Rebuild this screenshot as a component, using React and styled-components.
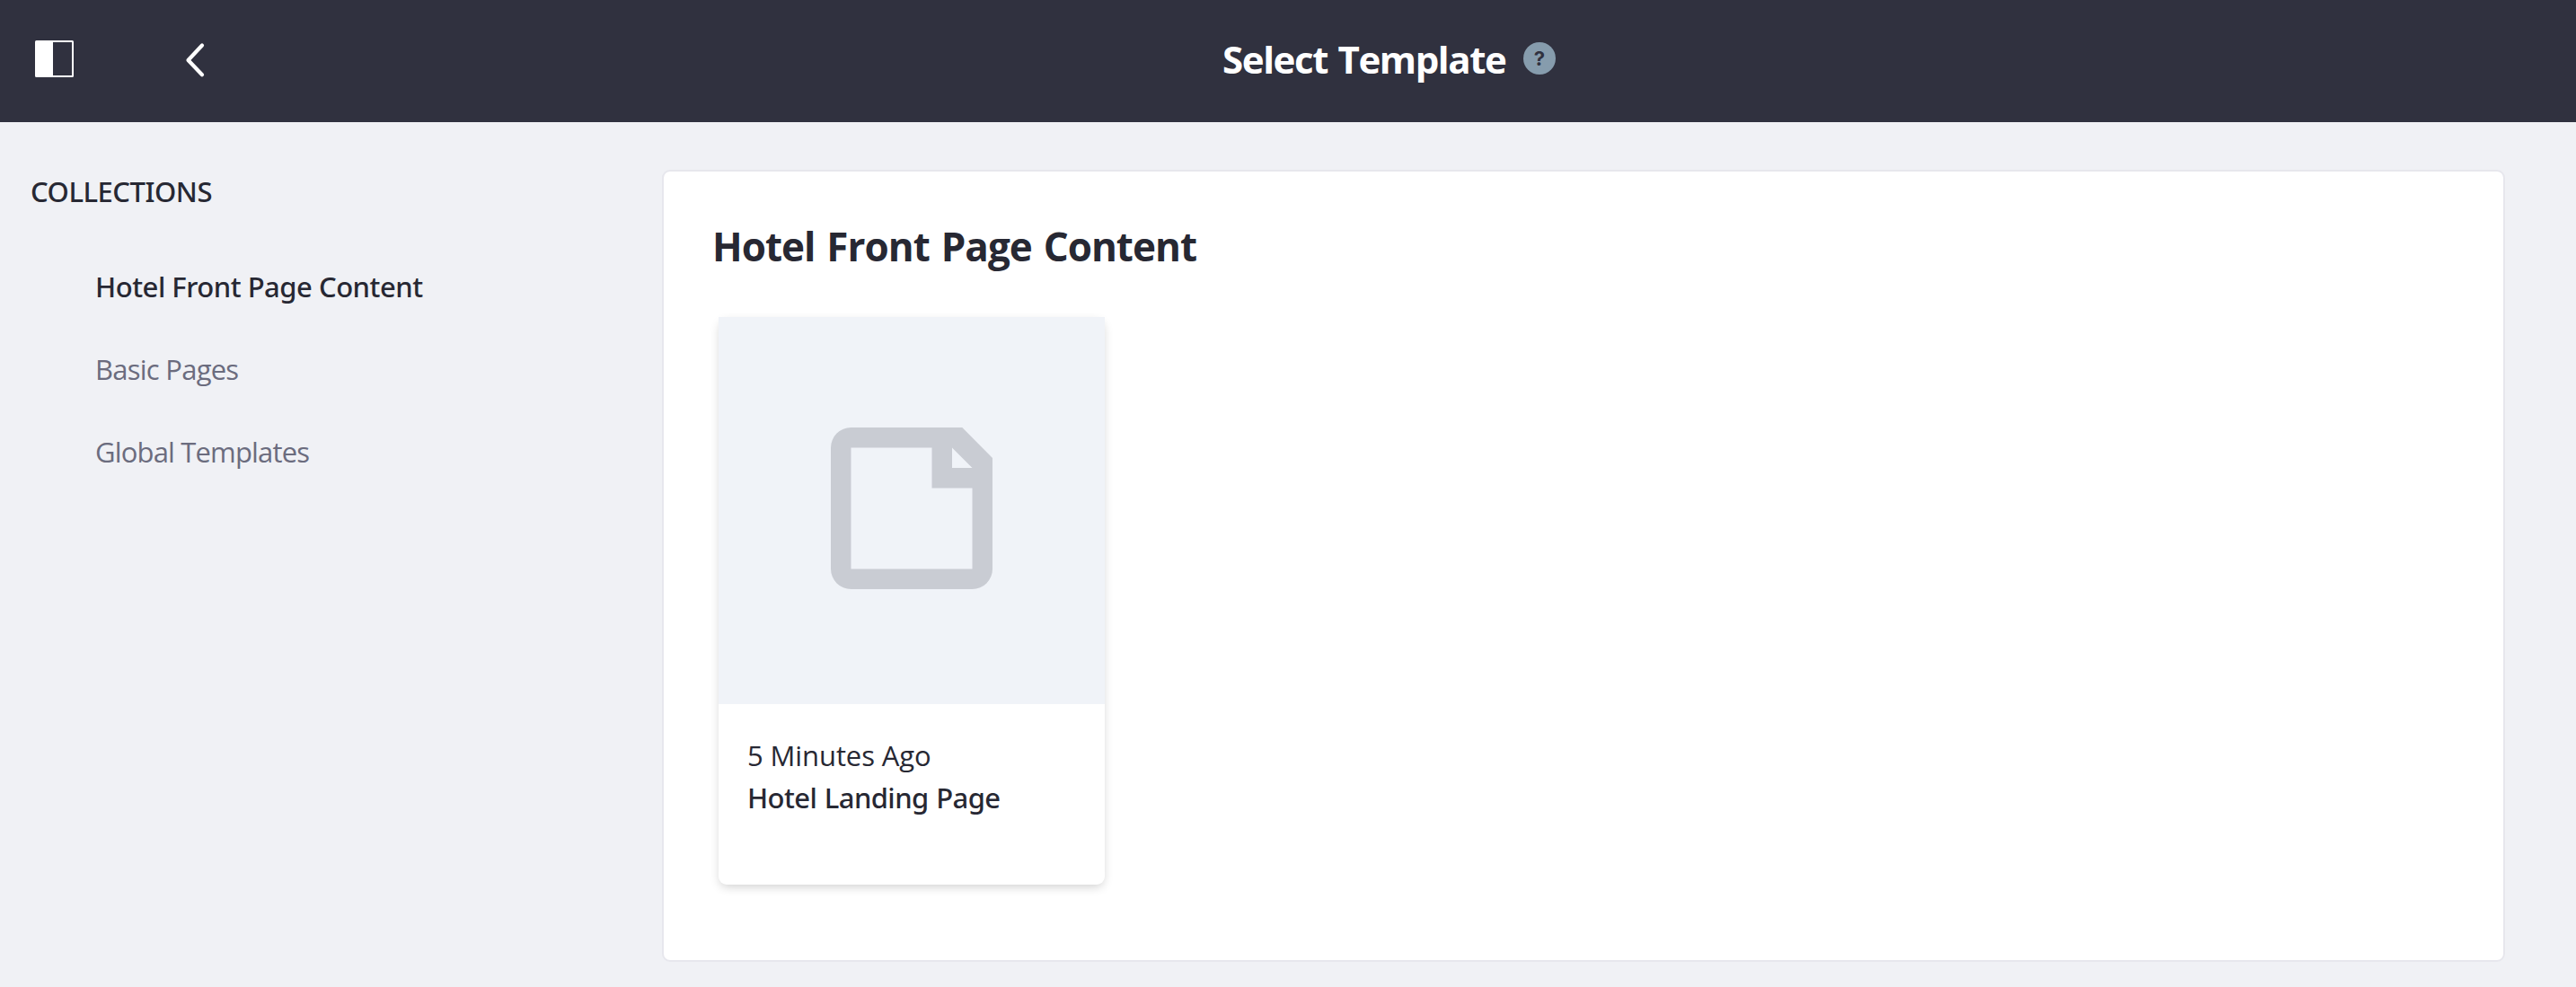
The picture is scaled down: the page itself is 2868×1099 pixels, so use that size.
import React from 'react';
import styled, { createGlobalStyle } from 'styled-components';

const GlobalStyle = createGlobalStyle`
  * { box-sizing: border-box; }
  body {
    margin: 0;
    background: #f0f1f5;
    color: #272833;
    font-family: 'Open Sans', 'Noto Sans', sans-serif;
    font-size: 31px;
    line-height: 40px;
  }
  h1, h2, h3, p, ul { margin: 0; padding: 0; }
`;

const Page = styled.div`
  display: flex;
  flex-direction: column;
  min-height: 1099px;
`;

const ControlBar = styled.header`
  display: grid;
  grid-template-columns: 1361px 1fr;
  align-items: center;
  height: 136px;
  background: #30313f;
  color: #fff;
`;

const BarActions = styled.div`
  display: flex;
  align-items: center;
  gap: 118px;
  padding-left: 39px;
`;

const IconButton = styled.button`
  display: flex;
  padding: ${(p) => p.$inset || '0'};
  border: 0;
  background: none;
  color: inherit;
`;

const BarTitle = styled.div`
  display: flex;
  align-items: center;
  gap: 18px;
  padding-bottom: 5px;
`;

const Title = styled.h1`
  width: 317px;
  font-size: 42px;
  font-weight: 700;
  line-height: 60px;
  letter-spacing: -1.4px;
  word-spacing: 2px;
  white-space: nowrap;
`;

const HelpBadge = styled.span`
  display: flex;
  align-items: center;
  justify-content: center;
  width: 36px;
  height: 36px;
  margin-bottom: 1px;
  border-radius: 50%;
  background: #869cad;
  color: #30313f;
  font: 700 22px/36px Inter, sans-serif;
`;

const Body = styled.div`
  display: flex;
  flex: 1;
`;

const Sidebar = styled.nav`
  width: 737px;
  padding: 57px 0 0 34px;
`;

const SidebarTitle = styled.h2`
  margin-bottom: 40px;
  font-family: 'Noto Sans', sans-serif;
  font-size: 31px;
  font-weight: 500;
  letter-spacing: -0.48px;
`;

const CollectionList = styled.ul`
  padding-left: 72px;
  list-style: none;
`;

const CollectionItem = styled.li`
  font-family: ${(p) => (p.$active ? "'Noto Sans'" : "'Open Sans'")}, sans-serif;
  font-weight: ${(p) => (p.$active ? 500 : 400)};
  line-height: 92px;
  letter-spacing: ${(p) => p.$tracking};
  color: ${(p) => (p.$active ? '#272833' : '#6b6c7e')};
`;

const Sheet = styled.main`
  width: 2052px;
  height: 882px;
  margin-top: 53px;
  padding: 53px;
  border: 2px solid #e7e7ed;
  border-radius: 9px;
  background: #fff;
`;

const SheetTitle = styled.h2`
  margin-bottom: 49px;
  padding-left: 1px;
  font-size: 44px;
  font-weight: 700;
  line-height: 60px;
  letter-spacing: -1px;
  word-spacing: 2.5px;
`;

const Card = styled.article`
  width: 430px;
  height: 632px;
  margin-left: 8px;
  border-radius: 9px;
  background: #fff;
  box-shadow: 0 4px 12px -2px rgba(0, 0, 0, 0.2);
`;

const Thumbnail = styled.div`
  display: flex;
  align-items: center;
  justify-content: center;
  height: 431px;
  padding-bottom: 6px;
  background: #f0f3f8;
`;

const CardBody = styled.div`
  padding: 34px 32px;
  line-height: 47px;
`;

const CardDate = styled.p`
  letter-spacing: -0.1px;
`;

const CardTitle = styled.h3`
  font-family: 'Noto Sans', sans-serif;
  font-size: 31px;
  font-weight: 500;
  letter-spacing: -0.6px;
  word-spacing: 1.2px;
`;

const collections = [
  { name: 'Hotel Front Page Content', active: true, tracking: '-0.48px' },
  { name: 'Basic Pages', tracking: '-0.75px' },
  { name: 'Global Templates', tracking: '-0.83px' },
];

const PanelIcon = () => (
  <svg width="43" height="41" viewBox="0 0 43 41">
    <path
      fill="#fff"
      fillRule="evenodd"
      d="M1.5 0h40A1.5 1.5 0 0 1 43 1.5v38a1.5 1.5 0 0 1-1.5 1.5h-40A1.5 1.5 0 0 1 0 39.5v-38A1.5 1.5 0 0 1 1.5 0zM20 2v37h21V2z"
    />
  </svg>
);

const BackIcon = () => (
  <svg width="32" height="40" viewBox="0 0 32 40">
    <path d="M25 3.5 9.5 20 25 36.2" fill="none" stroke="#fff" strokeWidth="4.2" strokeLinecap="round" strokeLinejoin="round" />
  </svg>
);

const PageIcon = () => (
  <svg width="180" height="180" viewBox="0 0 180 180">
    <path
      fill="#c9ccd3"
      fillRule="evenodd"
      d="M22.5 0H146.3L180 34V157.5A22.5 22.5 0 0 1 157.5 180H22.5A22.5 22.5 0 0 1 0 157.5V22.5A22.5 22.5 0 0 1 22.5 0zM22.5 22.5V157.5H157.5V67.5H112.5V22.5zM135 22.5V45H157.5z"
    />
  </svg>
);

export default function App() {
  return (
    <Page>
      <GlobalStyle />
      <ControlBar>
        <BarActions>
          <IconButton aria-label="Toggle menu" $inset="0 0 5px"><PanelIcon /></IconButton>
          <IconButton aria-label="Back" $inset="0 0 2px"><BackIcon /></IconButton>
        </BarActions>
        <BarTitle>
          <Title>Select Template</Title>
          <HelpBadge>?</HelpBadge>
        </BarTitle>
      </ControlBar>
      <Body>
        <Sidebar>
          <SidebarTitle>COLLECTIONS</SidebarTitle>
          <CollectionList>
            {collections.map((c) => (
              <CollectionItem key={c.name} $active={c.active} $tracking={c.tracking}>{c.name}</CollectionItem>
            ))}
          </CollectionList>
        </Sidebar>
        <Sheet>
          <SheetTitle>Hotel Front Page Content</SheetTitle>
          <Card>
            <Thumbnail><PageIcon /></Thumbnail>
            <CardBody>
              <CardDate>5 Minutes Ago</CardDate>
              <CardTitle>Hotel Landing Page</CardTitle>
            </CardBody>
          </Card>
        </Sheet>
      </Body>
    </Page>
  );
}
